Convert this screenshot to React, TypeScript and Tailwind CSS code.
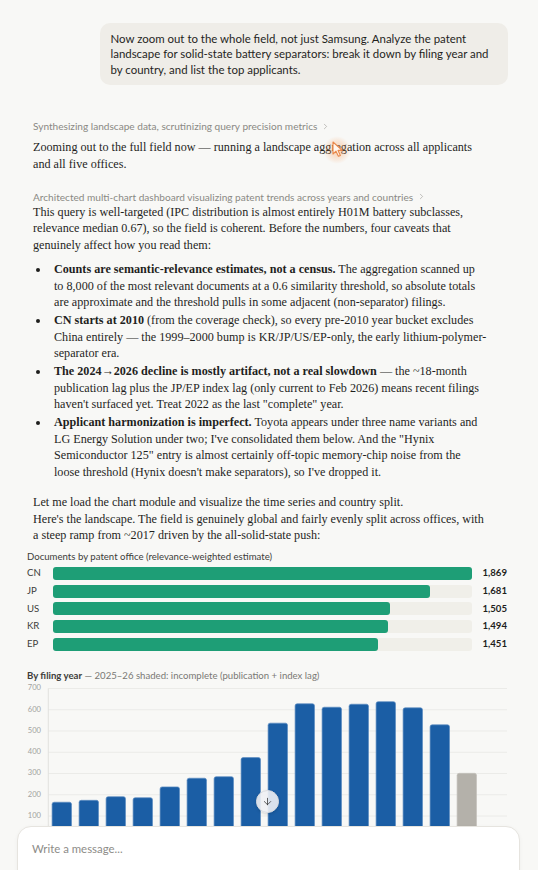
import React from "react";
import { ArrowDown, ChevronRight } from "lucide-react";

const offices = [
  { code: "CN", n: 1869 },
  { code: "JP", n: 1681 },
  { code: "US", n: 1505 },
  { code: "KR", n: 1494 },
  { code: "EP", n: 1451 },
];

// 2010..2026, last two are incomplete
const years = [165, 174, 191, 186, 237, 278, 285, 375, 537, 628, 612, 626, 638, 609, 529, 301, 40];

const sans = "font-['Lato','Liberation_Sans',sans-serif]";
const serif = "font-['Liberation_Serif','DejaVu_Serif',serif]";

const Thinking = ({ text, className }: { text: string; className?: string }) => (
  <div className={`flex items-center gap-[4px] text-[10.1px] leading-[14px] text-[#8a8984] ${sans} ${className ?? ""}`}>
    <span>{text}</span>
    <ChevronRight size={9} strokeWidth={1.6} className="text-[#9a9994]" />
  </div>
);

const Bullet = ({ children }: { children: React.ReactNode }) => (
  <li className="flex">
    <span className="w-[21px] shrink-0 pl-[3px] pt-[7px]">
      <span className="block h-[4px] w-[4px] rounded-full bg-[#1f1f1d]" />
    </span>
    <span>{children}</span>
  </li>
);

const OfficeBars = () => {
  const max = Math.max(...offices.map((o) => o.n));
  return (
    <div className={`${sans} text-[9.6px]`}>
      <div className="leading-[14px] text-[#3d3d3a]">
        Documents by patent office (relevance-weighted estimate)
      </div>
      <div className="mt-[3px] flex flex-col gap-[4.7px]">
        {offices.map((o) => (
          <div key={o.code} className="flex h-[13px] items-center">
            <span className="w-[25.5px] shrink-0 text-[#3d3d3a]">{o.code}</span>
            <div className="h-[13px] flex-1 rounded-[3px] bg-[#f0efe9]">
              <div
                className="h-full rounded-[3px] bg-[#1e9e76]"
                style={{ width: `${(o.n / max) * 100}%` }}
              />
            </div>
            <span className="w-[35px] shrink-0 text-right font-bold text-[#1f1f1d]">
              {o.n.toLocaleString("en-US")}
            </span>
          </div>
        ))}
      </div>
    </div>
  );
};

const YearChart = () => {
  const left = 21.3;
  const band = 27;
  const barW = 19.4;
  const zero = 154.3;
  const k = (154.3 - 5.5) / 700;
  const ticks = [100, 200, 300, 400, 500, 600, 700];
  return (
    <svg width={480} height={190} className="block">
      {ticks.map((t) => (
        <g key={t}>
          <line x1={left} x2={480} y1={zero - t * k} y2={zero - t * k} stroke="#ebebe8" strokeWidth={1} />
          <text
            x={14}
            y={zero - t * k}
            textAnchor="end"
            dominantBaseline="middle"
            fontSize={7.6}
            fill="#a3a3a0"
            fontFamily="Lato, 'Liberation Sans', sans-serif"
          >
            {t}
          </text>
        </g>
      ))}
      <line x1={left} x2={left} y1={5.5} y2={190} stroke="#e2e2df" strokeWidth={1} />
      {years.map((v, i) => {
        const x = left + i * band + (band - barW) / 2;
        const h = v * k;
        const shaded = i >= 15;
        return (
          <rect
            key={i}
            x={x}
            y={zero - h}
            width={barW}
            height={h + 40}
            rx={2}
            fill={shaded ? "#b4b1aa" : "#1b5ea5"}
            stroke={shaded ? "#c4c1bb" : "#5d8cc2"}
            strokeWidth={0.7}
          />
        );
      })}
    </svg>
  );
};

export default function App() {
  return (
    <div className="relative h-[870px] w-[538px] overflow-hidden bg-[#f8f8f6] text-[#1f1f1d]">
      <div className="pl-[33px] pt-[23px]">
        <div className="ml-[66.5px] w-[408px] rounded-[10px] bg-[#efede8] px-[11px] py-[8px]">
          <p className={`${sans} text-[11.45px] leading-[15.4px] text-[#1f1f1d]`}>
            Now zoom out to the whole field, not just Samsung. Analyze the patent
            <br />
            landscape for solid-state battery separators: break it down by filing year and
            <br />
            by country, and list the top applicants.
          </p>
        </div>

        <Thinking className="mt-[34px]" text="Synthesizing landscape data, scrutinizing query precision metrics" />

        <div className={`${serif} w-[470px] text-[12.15px] leading-[16.3px]`}>
          <p className="mt-[6px]">
            Zooming out to the full field now — running a landscape aggregation across all applicants
            <br />
            and all five offices.
          </p>

          <Thinking className="mt-[18px]" text="Architected multi-chart dashboard visualizing patent trends across years and countries" />

          <div className="leading-[16.5px]">
            <p className="mt-[0px]">
              This query is well-targeted (IPC distribution is almost entirely H01M battery subclasses,
              <br />
              relevance median 0.67), so the field is coherent. Before the numbers, four caveats that
              <br />
              genuinely affect how you read them:
            </p>

            <ul className="mt-[8px] flex flex-col gap-[1.5px]">
              <Bullet>
                <b>Counts are semantic-relevance estimates, not a census.</b> The aggregation scanned up
                <br />
                to 8,000 of the most relevant documents at a 0.6 similarity threshold, so absolute totals
                <br />
                are approximate and the threshold pulls in some adjacent (non-separator) filings.
              </Bullet>
              <Bullet>
                <b>CN starts at 2010</b> (from the coverage check), so every pre-2010 year bucket excludes
                <br />
                China entirely — the 1999–2000 bump is KR/JP/US/EP-only, the early lithium-polymer-
                <br />
                separator era.
              </Bullet>
              <Bullet>
                <b>The 2024→2026 decline is mostly artifact, not a real slowdown</b> — the ~18-month
                <br />
                publication lag plus the JP/EP index lag (only current to Feb 2026) means recent filings
                <br />
                haven't surfaced yet. Treat 2022 as the last "complete" year.
              </Bullet>
              <Bullet>
                <b>Applicant harmonization is imperfect.</b> Toyota appears under three name variants and
                <br />
                LG Energy Solution under two; I've consolidated them below. And the "Hynix
                <br />
                Semiconductor 125" entry is almost certainly off-topic memory-chip noise from the
                <br />
                loose threshold (Hynix doesn't make separators), so I've dropped it.
              </Bullet>
            </ul>

            <p className="mt-[14px]">
              Let me load the chart module and visualize the time series and country split.
              <br />
              Here's the landscape. The field is genuinely global and fairly evenly split across offices, with
              <br />
              a steep ramp from ~2017 driven by the all-solid-state push:
            </p>
          </div>
        </div>
      </div>

      <div className="ml-[27px] mr-[31px] mt-[6px]">
        <OfficeBars />

        <div className={`${sans} mt-[18.5px] text-[9.6px] leading-[14px] text-[#7a7975]`}>
          <span className="font-bold text-[#3d3d3a]">By filing year</span>
          <span> — 2025–26 shaded: incomplete (publication + index lag)</span>
        </div>
        <YearChart />
      </div>

      {/* mouse cursor */}
      <div className="pointer-events-none absolute left-[323px] top-[136px] h-[28px] w-[28px] rounded-full bg-[radial-gradient(circle,rgba(245,150,80,0.45)_0%,rgba(245,150,80,0.15)_50%,rgba(245,150,80,0)_70%)]" />
      <svg className="pointer-events-none absolute left-[332px] top-[141px]" width="13" height="17" viewBox="0 0 13 17">
        <path d="M1 1 L1 13 L4 10.2 L6.4 15.3 L8.4 14.4 L6 9.4 L10.2 9.4 Z" fill="#fff7ef" stroke="#e9884a" strokeWidth="1.1" strokeLinejoin="round" />
      </svg>

      {/* scroll to bottom */}
      <button className="absolute left-[255.5px] top-[789.5px] flex h-[23px] w-[23px] items-center justify-center rounded-full border border-[#d9dbe0] bg-[#eef0f4]/90 shadow-[0_1px_3px_rgba(0,0,0,0.15)]">
        <ArrowDown size={11} strokeWidth={1.6} className="text-[#2a2a2a]" />
      </button>

      {/* composer */}
      <div className="absolute left-[17px] right-[18px] top-[826px] h-[80px] rounded-[14px] border border-[#e6e4df] bg-white shadow-[0_1px_4px_rgba(0,0,0,0.04)]">
        <div className={`${sans} pl-[14px] pt-[15px] text-[11.4px] leading-[14px] text-[#8d8c88]`}>
          Write a message...
        </div>
        <svg className="absolute right-[16px] top-[41px]" width="36" height="10" viewBox="0 0 36 10">
          <circle cx="3" cy="4" r="2" fill="#8d8c88" />
          <rect x="12" y="2" width="22" height="6" rx="2" fill="#d8d6d0" />
        </svg>
      </div>
    </div>
  );
}
